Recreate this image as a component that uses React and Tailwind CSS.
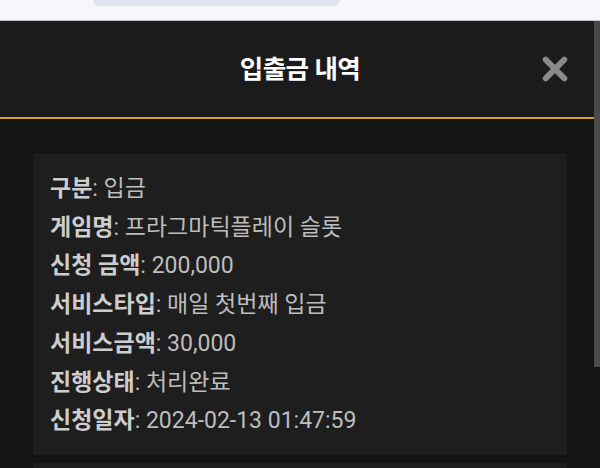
const rows = [
  ['구분', '입금'],
  ['게임명', '프라그마틱플레이 슬롯'],
  ['신청 금액', '200,000'],
  ['서비스타입', '매일 첫번째 입금'],
  ['서비스금액', '30,000'],
  ['진행상태', '처리완료'],
  ['신청일자', '2024-02-13 01:47:59'],
];

export default function App() {
  return (
    <div
      className="w-[600px] h-[468px] overflow-hidden flex flex-col bg-[#141414]"
      style={{ fontFamily: "Roboto, 'Noto Sans CJK KR', sans-serif" }}
    >
      {/* browser strip */}
      <div className="h-[21px] shrink-0 bg-[#f7f7fb] border-b border-[#c4c4c8] pl-[93px]">
        <div className="w-[247px] h-[6px] bg-[#e1e4ee] rounded-b-[10px]" />
      </div>

      <div className="flex-1 flex min-h-0">
        <div className="flex-1 flex flex-col min-w-0">
          {/* header */}
          <div className="h-[98px] shrink-0 bg-[#1b1b1b] border-b-2 border-[#d9a21b] flex items-center justify-center relative">
            <h1 className="text-[25.5px] font-bold text-white tracking-[-0.5px] pl-[6px]">입출금 내역</h1>
            <svg
              className="absolute left-[541px] top-[34px]"
              width="28"
              height="28"
              viewBox="0 0 24 24"
              fill="none"
              stroke="#8a8a8a"
              strokeWidth="5"
              strokeLinecap="round"
            >
              <path d="M4 4 L20 20 M20 4 L4 20" />
            </svg>
          </div>

          {/* list */}
          <div className="flex-1 pl-[33px] pr-[27px] pt-[35px] flex flex-col gap-[8px]">
            <div className="bg-[#1e1e1e] pl-[17px] pt-[16px] pb-[14px]">
              {rows.map(([label, value]) => (
                <div key={label} className="h-[38.7px] flex items-center text-[23px] text-[#bdbdbd] whitespace-nowrap">
                  <span className="font-bold text-[#cdcdcd]">{label}</span>
                  <span>:&nbsp;{value}</span>
                </div>
              ))}
            </div>
            <div className="bg-[#1e1e1e] h-[60px] shrink-0" />
          </div>
        </div>

        {/* scrollbar */}
        <div className="w-[6px] shrink-0 bg-[#141414]">
          <div className="h-[346px] bg-[#4a4a4a]" />
        </div>
      </div>
    </div>
  );
}
